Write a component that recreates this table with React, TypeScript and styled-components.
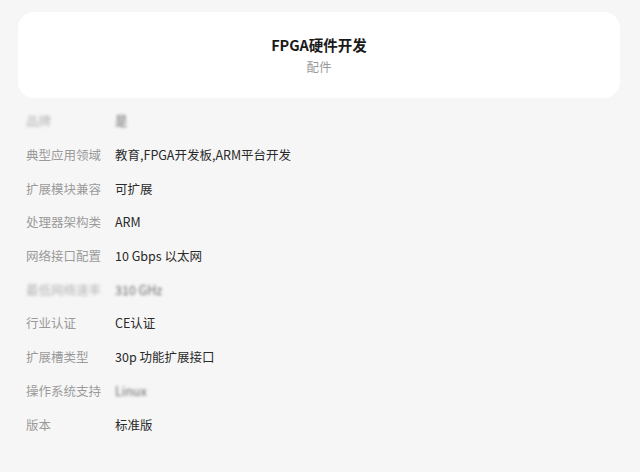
import React from "react";
import styled, { createGlobalStyle } from "styled-components";

const Global = createGlobalStyle`
  html, body { margin: 0; padding: 0; background: #f6f6f6; }
  body { font-family: "Noto Sans CJK SC", "Noto Sans", sans-serif; }
`;

const Page = styled.div`
  width: 640px;
  height: 472px;
  box-sizing: border-box;
  padding: 12px 20px 0 18px;
  background: #f6f6f6;
  overflow: hidden;
`;

const Card = styled.div`
  background: #fff;
  border-radius: 16px;
  height: 86px;
  display: flex;
  flex-direction: column;
  align-items: center;
  justify-content: center;
  gap: 3px;
`;

const Title = styled.div`
  font-size: 14.5px;
  font-weight: 700;
  color: #1a1a1a;
  line-height: 20px;
`;

const Sub = styled.div`
  font-size: 12.5px;
  color: #999;
  line-height: 18px;
`;

const List = styled.div`
  display: flex;
  flex-direction: column;
  padding: 6px 0 0 8px;
`;

const Row = styled.div`
  display: flex;
  align-items: center;
  height: 33.7px;
  font-size: 12.5px;
`;

const Label = styled.div<{ $blur?: boolean }>`
  width: 89px;
  color: #9a9a9a;
  white-space: nowrap;
  filter: ${(p) => (p.$blur ? "blur(1.4px)" : "none")};
  opacity: ${(p) => (p.$blur ? 0.7 : 1)};
`;

const Value = styled.div<{ $blur?: boolean }>`
  color: #2a2a2a;
  white-space: nowrap;
  filter: ${(p) => (p.$blur ? "blur(1.4px)" : "none")};
  opacity: ${(p) => (p.$blur ? 0.7 : 1)};
`;

const rows: { k: string; v: string; blur?: boolean }[] = [
  { k: "品牌", v: "是", blur: true },
  { k: "典型应用领域", v: "教育,FPGA开发板,ARM平台开发" },
  { k: "扩展模块兼容", v: "可扩展" },
  { k: "处理器架构类", v: "ARM" },
  { k: "网络接口配置", v: "10 Gbps 以太网" },
  { k: "最低网络速率", v: "310 GHz", blur: true },
  { k: "行业认证", v: "CE认证" },
  { k: "扩展槽类型", v: "30p 功能扩展接口" },
  { k: "操作系统支持", v: "Linux", blur: true },
  { k: "版本", v: "标准版" },
];

export default function App() {
  return (
    <>
      <Global />
      <Page>
        <Card>
          <Title>FPGA硬件开发</Title>
          <Sub>配件</Sub>
        </Card>
        <List>
          {rows.map((r, i) => (
            <Row key={i}>
              <Label $blur={r.blur && i !== 8}>{r.k}</Label>
              <Value $blur={r.blur}>{r.v}</Value>
            </Row>
          ))}
        </List>
      </Page>
    </>
  );
}
